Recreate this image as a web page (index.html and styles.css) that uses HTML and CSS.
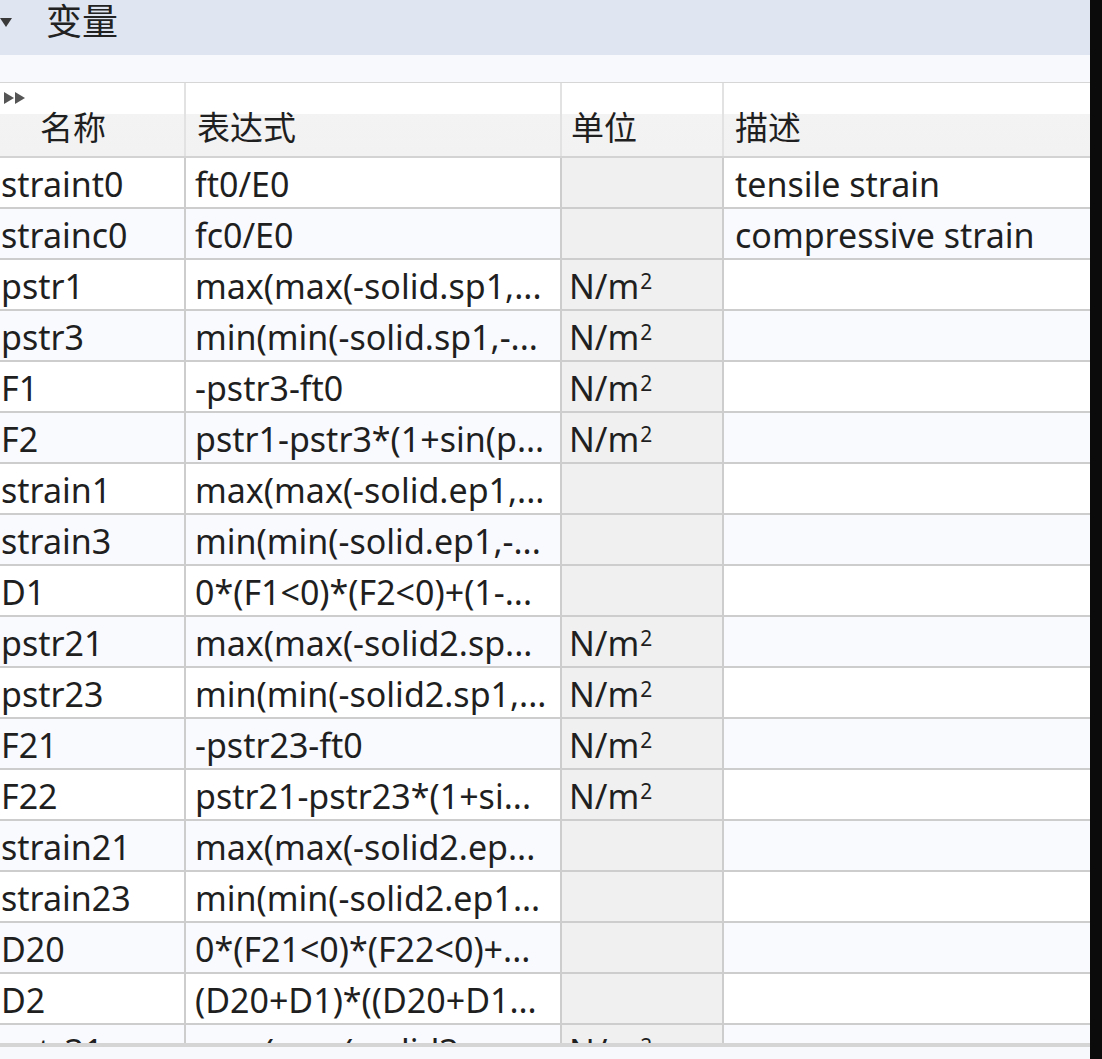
FILE: index.html
```html
<!DOCTYPE html>
<html>
<head>
	<meta charset="utf-8">
	<title>变量</title>
	<link rel="stylesheet" href="styles.css">
</head>
<body>
	<div class="panel">
		<div class="section-title">
			<span class="caret"></span>
			<span class="section-label">变量</span>
		</div>
		<div class="section-gap"></div>

		<div class="grid-view">
			<div class="row grid-head">
				<div class="cell c-name">
					<svg class="expand-icon" width="26" height="14" viewBox="0 0 26 14">
						<polygon points="1,1 11,7 1,13" fill="#555555"/>
						<polygon points="12,1 22,7 12,13" fill="#555555"/>
					</svg>
					<span class="head-name">名称</span>
				</div>
				<div class="cell c-expr">表达式</div>
				<div class="cell c-unit">单位</div>
				<div class="cell c-desc">描述</div>
			</div>

			<div class="row"><div class="cell c-name">straint0</div><div class="cell c-expr">ft0/E0</div><div class="cell c-unit"></div><div class="cell c-desc">tensile strain</div></div>
			<div class="row alt"><div class="cell c-name">strainc0</div><div class="cell c-expr">fc0/E0</div><div class="cell c-unit"></div><div class="cell c-desc">compressive strain</div></div>
			<div class="row"><div class="cell c-name">pstr1</div><div class="cell c-expr">max(max(-solid.sp1,...</div><div class="cell c-unit">N/m<span class="sq">2</span></div><div class="cell c-desc"></div></div>
			<div class="row alt"><div class="cell c-name">pstr3</div><div class="cell c-expr">min(min(-solid.sp1,-...</div><div class="cell c-unit">N/m<span class="sq">2</span></div><div class="cell c-desc"></div></div>
			<div class="row"><div class="cell c-name">F1</div><div class="cell c-expr">-pstr3-ft0</div><div class="cell c-unit">N/m<span class="sq">2</span></div><div class="cell c-desc"></div></div>
			<div class="row alt"><div class="cell c-name">F2</div><div class="cell c-expr">pstr1-pstr3*(1+sin(p...</div><div class="cell c-unit">N/m<span class="sq">2</span></div><div class="cell c-desc"></div></div>
			<div class="row"><div class="cell c-name">strain1</div><div class="cell c-expr">max(max(-solid.ep1,...</div><div class="cell c-unit"></div><div class="cell c-desc"></div></div>
			<div class="row alt"><div class="cell c-name">strain3</div><div class="cell c-expr">min(min(-solid.ep1,-...</div><div class="cell c-unit"></div><div class="cell c-desc"></div></div>
			<div class="row"><div class="cell c-name">D1</div><div class="cell c-expr">0*(F1&lt;0)*(F2&lt;0)+(1-...</div><div class="cell c-unit"></div><div class="cell c-desc"></div></div>
			<div class="row alt"><div class="cell c-name">pstr21</div><div class="cell c-expr">max(max(-solid2.sp...</div><div class="cell c-unit">N/m<span class="sq">2</span></div><div class="cell c-desc"></div></div>
			<div class="row"><div class="cell c-name">pstr23</div><div class="cell c-expr">min(min(-solid2.sp1,...</div><div class="cell c-unit">N/m<span class="sq">2</span></div><div class="cell c-desc"></div></div>
			<div class="row alt"><div class="cell c-name">F21</div><div class="cell c-expr">-pstr23-ft0</div><div class="cell c-unit">N/m<span class="sq">2</span></div><div class="cell c-desc"></div></div>
			<div class="row"><div class="cell c-name">F22</div><div class="cell c-expr">pstr21-pstr23*(1+si...</div><div class="cell c-unit">N/m<span class="sq">2</span></div><div class="cell c-desc"></div></div>
			<div class="row alt"><div class="cell c-name">strain21</div><div class="cell c-expr">max(max(-solid2.ep...</div><div class="cell c-unit"></div><div class="cell c-desc"></div></div>
			<div class="row"><div class="cell c-name">strain23</div><div class="cell c-expr">min(min(-solid2.ep1...</div><div class="cell c-unit"></div><div class="cell c-desc"></div></div>
			<div class="row alt"><div class="cell c-name">D20</div><div class="cell c-expr">0*(F21&lt;0)*(F22&lt;0)+...</div><div class="cell c-unit"></div><div class="cell c-desc"></div></div>
			<div class="row"><div class="cell c-name">D2</div><div class="cell c-expr">(D20+D1)*((D20+D1...</div><div class="cell c-unit"></div><div class="cell c-desc"></div></div>
			<div class="row alt"><div class="cell c-name">pstr31</div><div class="cell c-expr">max(max(-solid3.sp...</div><div class="cell c-unit">N/m<span class="sq">2</span></div><div class="cell c-desc"></div></div>
		</div>

		<div class="hscroll"></div>
		<div class="panel-foot"></div>
	</div>
</body>
</html>
```

FILE: styles.css
```css
body {
	margin: 0;
	padding: 0;
	background-color: #0b0b0b;
	font-family: "Noto Sans", "Noto Sans CJK SC", sans-serif;
	color: #1f1f1f;
}

.panel {
	width: 1090px;
	height: 1059px;
	overflow: hidden;
	background-color: #F8F9FC;
}

/* collapsible section header */
.section-title {
	height: 55px;
	box-sizing: border-box;
	display: flex;
	align-items: flex-start;
	background-color: #DFE5F1;
}

.caret {
	width: 0;
	height: 0;
	margin-top: 18px;
	border-left: 6px solid transparent;
	border-right: 6px solid transparent;
	border-top: 9px solid #3a3a3a;
}

.section-label {
	margin-left: 34px;
	font-size: 36px;
	line-height: 44px;
	color: #222222;
}

.section-gap {
	height: 27px;
	background-color: #F8F9FD;
	border-bottom: 1px solid #D6D6D6;
}

/* the variables table */
.grid-view {
	height: 960px;
	overflow: hidden;
	background-color: #FFFFFF;
}

.row {
	display: grid;
	grid-template-columns: 186px 376px 162px 1fr;
	height: 51px;
	box-sizing: border-box;
	border-bottom: 2px solid #CDCDCD;
	background-color: #FFFFFF;
}

.row.alt {
	background-color: #F9FAFD;
}

.cell {
	box-sizing: border-box;
	border-right: 2px solid #CDCDCD;
	padding-top: 3px;
	font-size: 34px;
	line-height: 46px;
	white-space: nowrap;
	overflow: hidden;
}

.c-name {
	padding-left: 1px;
}

.c-expr {
	padding-left: 9px;
}

.c-unit {
	padding-left: 7px;
	background-color: #F0F0F0;
}

.c-desc {
	padding-left: 11px;
	border-right: none;
}

/* superscript of the unit, drawn smaller than the font's own ² */
.sq {
	position: relative;
	top: -10px;
	margin-left: 1px;
	font-size: 21px;
	line-height: 0;
}

.grid-head {
	height: 75px;
	background: linear-gradient(#FFFFFF 0, #FFFFFF 42%, #F3F3F3 42%, #F2F2F2 100%);
	border-bottom: 2px solid #D3D3D3;
}

.grid-head .cell {
	position: relative;
	padding-top: 25px;
	font-size: 33px;
	line-height: 40px;
	background: none;
	border-right-color: #E2E2E2;
}

.grid-head .c-expr {
	padding-left: 11px;
}

.grid-head .c-unit {
	padding-left: 9px;
}

.expand-icon {
	position: absolute;
	left: 3px;
	top: 8px;
}

.head-name {
	padding-left: 39px;
}

.hscroll {
	height: 4px;
	background-color: #D5D5D5;
}

.panel-foot {
	height: 12px;
	background-color: #F7F8FB;
}
```
